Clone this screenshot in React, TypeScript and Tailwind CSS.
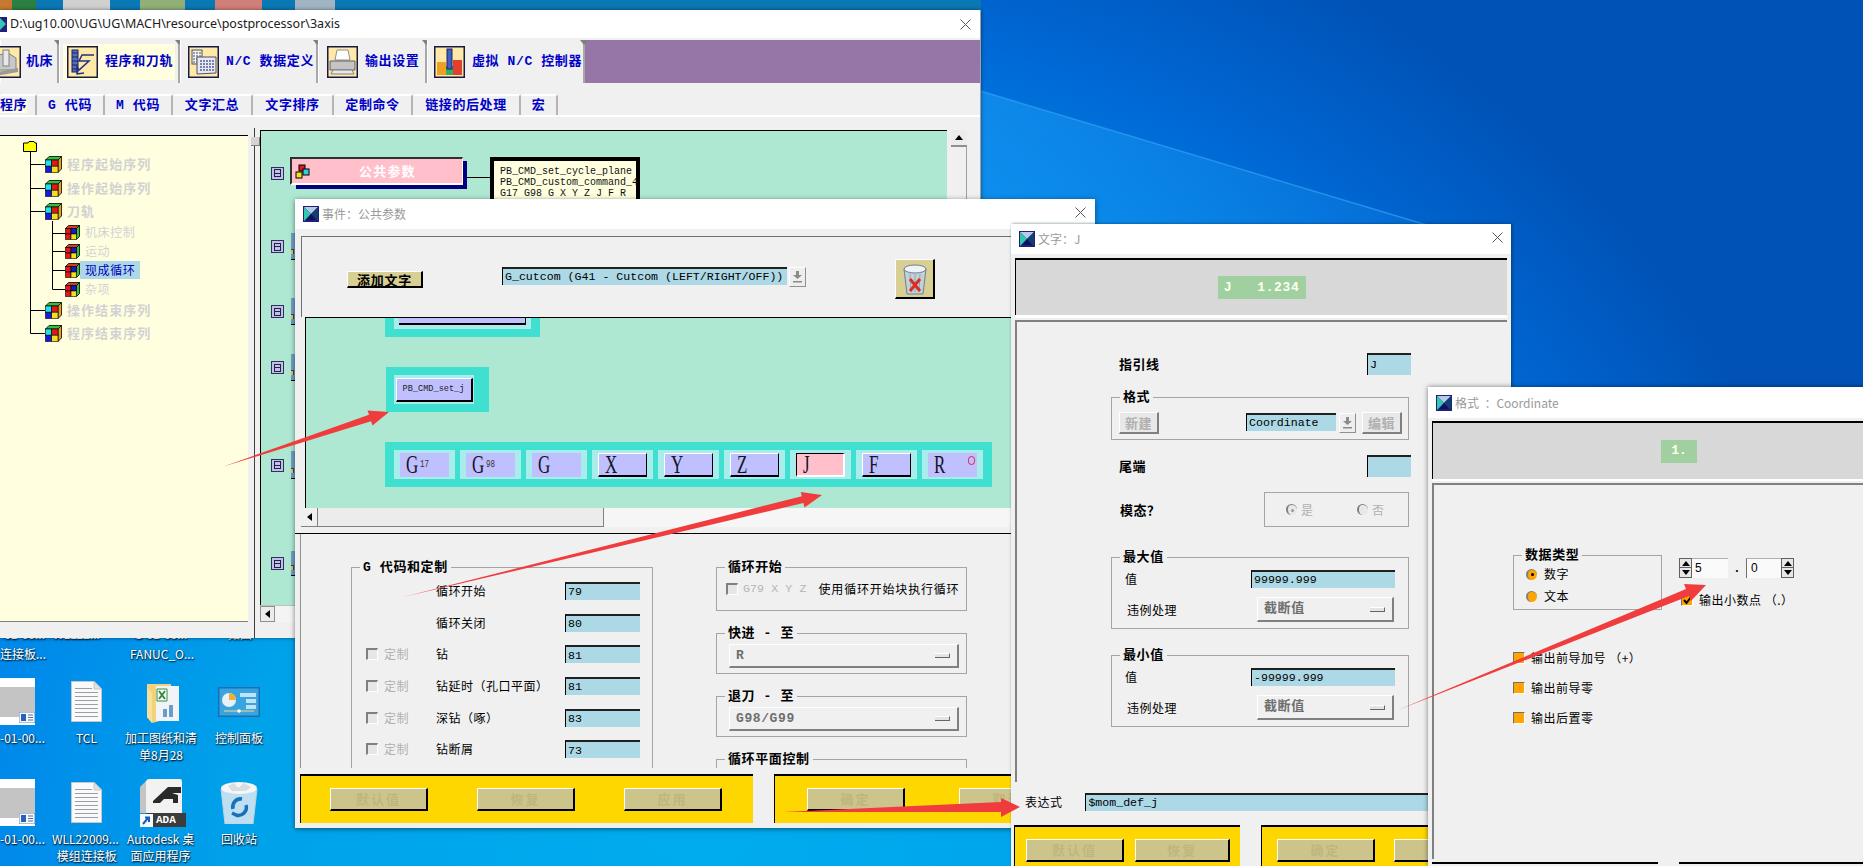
import React from "react";

const MONO = "font-['Liberation_Mono','Noto_Sans_CJK_SC',monospace]";
const CJK = "font-['Noto_Sans_CJK_SC','Liberation_Sans',sans-serif]";

function CloseX({ className }: { className: string }) {
  return (
    <svg className={className} width="11" height="11" viewBox="0 0 11 11">
      <path d="M0.5 0.5 L10.5 10.5 M10.5 0.5 L0.5 10.5" stroke="#555" strokeWidth="1" fill="none" />
    </svg>
  );
}

function UgIcon() {
  return (
    <svg width="16" height="16" viewBox="0 0 16 16" className="shrink-0">
      <rect width="16" height="16" fill="#20207a" />
      <path d="M1 1 L15 1 L8 8 Z" fill="#b8c8e8" />
      <path d="M1 1 L8 8 L1 15 Z" fill="#30c8b0" />
      <path d="M15 1 L8 8 L15 15 Z" fill="#104070" />
      <path d="M3 14 L8 8 L13 14 Z" fill="#101060" />
    </svg>
  );
}

function DlgTitle({ title, h }: { title: string; h: string }) {
  return (
    <div className={`${h} bg-white flex items-center pl-[8px] gap-[3px] shrink-0`}>
      <UgIcon />
      <span className={`${CJK} text-[12px] text-[#9a9a9a] whitespace-pre`}>{title}</span>
    </div>
  );
}

function BigCube() {
  return (
    <svg width="17" height="17" viewBox="0 0 17 17" className="shrink-0">
      <path d="M0.5 4 L4 0.5 L16.5 0.5 L13 4 Z" fill="#30c040" stroke="#000" strokeWidth="0.8" />
      <path d="M13 4 L16.5 0.5 L16.5 13 L13 16.5 Z" fill="#e8a020" stroke="#000" strokeWidth="0.8" />
      <rect x="0.5" y="4" width="6.2" height="6.2" fill="#20e0e8" stroke="#000" strokeWidth="0.6" />
      <rect x="6.7" y="4" width="6.3" height="6.2" fill="#e01818" stroke="#000" strokeWidth="0.6" />
      <rect x="0.5" y="10.2" width="6.2" height="6.3" fill="#1818e0" stroke="#000" strokeWidth="0.6" />
      <rect x="6.7" y="10.2" width="6.3" height="6.3" fill="#f0e020" stroke="#000" strokeWidth="0.6" />
    </svg>
  );
}

function SmallCube() {
  return (
    <svg width="15" height="15" viewBox="0 0 15 15" className="shrink-0">
      <path d="M0.5 3.5 L3.5 0.5 L14.5 0.5 L11.5 3.5 Z" fill="#d04020" stroke="#000" strokeWidth="0.8" />
      <path d="M11.5 3.5 L14.5 0.5 L14.5 11.5 L11.5 14.5 Z" fill="#30c040" stroke="#000" strokeWidth="0.8" />
      <rect x="0.5" y="3.5" width="5.5" height="5.5" fill="#e01818" stroke="#000" strokeWidth="0.6" />
      <rect x="6" y="3.5" width="5.5" height="5.5" fill="#1818c0" stroke="#000" strokeWidth="0.6" />
      <rect x="0.5" y="9" width="5.5" height="5.5" fill="#e01818" stroke="#000" strokeWidth="0.6" />
      <rect x="6" y="9" width="5.5" height="5.5" fill="#f0e020" stroke="#000" strokeWidth="0.6" />
    </svg>
  );
}

function TreeTop({ label, h }: { label: string; h: string }) {
  return (
    <div className={`${h} flex items-center pl-[45px] gap-[5px]`}>
      <BigCube />
      <span className={`${CJK} font-bold text-[13px] tracking-[1.05px] text-[#d2d2d2]`}>{label}</span>
    </div>
  );
}

function TreeSub({ label, h, sel }: { label: string; h: string; sel?: boolean }) {
  return (
    <div className={`${h} flex items-center pl-[65px]`}>
      <SmallCube />
      <span
        className={`${CJK} text-[12px] tracking-[0.6px] h-[18px] leading-[18px] w-[60px] pl-[5px] ${
          sel ? "bg-[#add8e6] text-[#0000c0]" : "text-[#d2d2d2]"
        }`}
      >
        {label}
      </span>
    </div>
  );
}

function TabIcon({ children }: { children: React.ReactNode }) {
  return (
    <svg width="31" height="32" viewBox="0 0 31 32" className="shrink-0">
      <rect x="0.75" y="0.75" width="29.5" height="30.5" fill="#ffe9a8" stroke="#1a1a40" strokeWidth="1.5" />
      {children}
    </svg>
  );
}

function ToolTab({
  w,
  pad,
  icon,
  label,
  sel,
  gap,
}: {
  w: string;
  pad: string;
  icon: React.ReactNode;
  label: string;
  sel?: boolean;
  gap?: string;
}) {
  return (
    <div className={`${w} ${pad} relative h-full shrink-0 flex items-center border-r-2 border-r-[#a8a8a8] border-l border-l-white bg-[#f0f0f0]`}>
      <span className="absolute -right-[5px] top-0 w-0 h-0 border-x-[4px] border-x-transparent border-t-[5px] border-t-[#808080]" />
      {sel && <span className="absolute left-[3px] right-[3px] top-[4px] bottom-[3px] bg-[#ffffe0]" />}
      <span className={`relative flex items-center ${gap ?? "gap-[7px]"}`}>
        {icon}
        <span className={`${MONO} font-bold text-[13px] tracking-[0.6px] text-[#0000c8] whitespace-pre`}>{label}</span>
      </span>
    </div>
  );
}

function SubTab({ w, label, sel }: { w: string; label: string; sel?: boolean }) {
  return (
    <div className={`${w} h-full flex items-center ${sel ? "justify-start" : "justify-center"} shrink-0 border-t-2 border-t-white border-r-2 border-r-[#b4b4b4] rounded-t-[3px]`}>
      <span className={`${MONO} font-bold text-[13px] tracking-[0.6px] text-[#0000c8] whitespace-pre leading-[14px] ${sel ? "bg-[#ffffe0]" : ""}`}>{label}</span>
    </div>
  );
}

function Minus() {
  return (
    <div className="w-[13px] h-[13px] shrink-0 bg-[#c0c0e8] border border-[#303060] flex items-center justify-center">
      <div className="w-[7px] h-[8px] border border-[#202040] flex items-center justify-center">
        <div className="w-[5px] h-px bg-[#202040]" />
      </div>
    </div>
  );
}

function Sliver() {
  return (
    <div className="w-[6px] h-full bg-[#6f9fc4] border-b border-b-black flex items-end pb-[5px]">
      <div className="w-[3px] h-[5px] bg-[#d8c870] border-t border-r border-[#404040]" />
    </div>
  );
}

function CanvasRow({ mt, h }: { mt: string; h: string }) {
  return (
    <div className={`${mt} ${h} flex items-center pl-[10px] gap-[7px]`}>
      <Minus />
      <Sliver />
    </div>
  );
}

function Bevel({ className, children }: { className: string; children?: React.ReactNode }) {
  return (
    <div className={`${className} border-t border-l border-t-white border-l-white border-r-2 border-b-2 border-r-black border-b-black flex items-center justify-center`}>
      {children}
    </div>
  );
}

function Inp({ className, value }: { className: string; value?: string }) {
  return (
    <div className={`${className} bg-[#add8e6] border-t-2 border-t-[#202020] border-l border-l-black flex items-center pl-[2px] ${MONO} text-[11.6px] text-black leading-none whitespace-pre overflow-hidden`}>
      {value}
    </div>
  );
}

function ArrowBtn({ className }: { className: string }) {
  return (
    <div className={`${className} bg-[#eeeeee] border-t border-l border-white border-r border-b border-r-[#909090] border-b-[#909090] flex items-center justify-center`}>
      <svg width="9" height="12" viewBox="0 0 9 12">
        <path d="M3 0 H6 V4 H9 L4.5 8 L0 4 H3 Z" fill="#8a8a8a" />
        <rect y="10" width="9" height="1.5" fill="#8a8a8a" />
      </svg>
    </div>
  );
}

function Drop({ className, value }: { className: string; value: string }) {
  return (
    <div className={`${className} bg-[#f0f0f0] border-t border-l border-t-white border-l-white border-r-2 border-b-2 border-r-[#808080] border-b-[#808080] flex items-center justify-between pl-[6px] pr-[7px]`}>
      <span className={`${MONO} font-bold text-[13px] text-[#6e6e6e] tracking-[0.6px]`}>{value}</span>
      <span className="w-[15px] h-[5px] bg-[#e4e4e4] border-r border-b border-r-[#666] border-b-[#666] border-t border-t-white" />
    </div>
  );
}

function Group({ className, label, labelX, children }: { className: string; label: string; labelX?: string; children?: React.ReactNode }) {
  return (
    <div className={`${className} relative border border-[#a4a4a4]`}>
      <span className={`absolute -top-[9px] ${labelX ?? "left-[8px]"} bg-[#f0f0f0] px-[3px] ${MONO} font-bold text-[13px] leading-[17px] tracking-[0.6px] text-black whitespace-pre`}>
        {label}
      </span>
      {children}
    </div>
  );
}

function Label({ children, className }: { children: React.ReactNode; className?: string }) {
  return <span className={`${CJK} text-[12px] tracking-[0.5px] text-black whitespace-pre ${className ?? ""}`}>{children}</span>;
}

function BoldLabel({ children, className }: { children: React.ReactNode; className?: string }) {
  return <span className={`${CJK} font-bold text-[13px] tracking-[0.5px] text-black whitespace-pre ${className ?? ""}`}>{children}</span>;
}

function DisabledCheck() {
  return <span className="w-[12px] h-[12px] shrink-0 bg-[#e6e6e6] border-t-2 border-l-2 border-t-[#808080] border-l-[#808080] border-r border-b border-r-white border-b-white" />;
}

function LetterCell({ letter, sup, raised, pink, dot }: { letter: string; sup?: string; raised?: boolean; pink?: boolean; dot?: boolean }) {
  return (
    <div className="w-[61px] h-[29px] bg-[#a8ecec] flex items-center justify-center shrink-0">
      <div
        className={`relative w-[49px] h-[24px] flex items-center pl-[6px] gap-[2px] ${pink ? "bg-[#ffc0cb]" : "bg-[#c0c0ff]"} ${
          raised
            ? pink
              ? "border-t border-l border-t-black border-l-black border-r-2 border-b-2 border-r-white border-b-white"
              : "border-t border-l border-t-white border-l-white border-r border-b-2 border-r-black border-b-black"
            : ""
        }`}
      >
        <span className="font-['Liberation_Serif',serif] text-[25px] leading-none text-[#141428] scale-x-[0.68] origin-left w-[12px]">{letter}</span>
        {sup && <span className={`${MONO} text-[10px] leading-none text-[#333] scale-x-75 origin-left`}>{sup}</span>}
        {dot && <span className="absolute right-[2px] top-[3px] w-[7px] h-[9px] rounded-full border-[1.5px] border-[#e0204a]" />}
      </div>
    </div>
  );
}

function YellowBtn({ className, label }: { className: string; label: string }) {
  return (
    <Bevel className={`${className} bg-[#cdc48c] h-[23px] shrink-0`}>
      <span className={`${CJK} font-bold text-[13px] tracking-[2px] text-[#bfb67e]`}>{label}</span>
    </Bevel>
  );
}

function Radio({ on, disabled }: { on?: boolean; disabled?: boolean }) {
  return (
    <span
      className={`w-[11px] h-[11px] rounded-full shrink-0 flex items-center justify-center border-l-2 border-t border-l-[#808080] border-t-[#808080] ${
        disabled ? "bg-[#e8e8e8]" : "bg-[#ffa500]"
      }`}
    >
      {on && <span className={`w-[3px] h-[3px] rounded-full ${disabled ? "bg-[#9a9a9a]" : "bg-black"}`} />}
    </span>
  );
}

function OrangeCheck({ checked }: { checked?: boolean }) {
  return (
    <span className="w-[12px] h-[12px] shrink-0 bg-[#ffa500] border-t border-l border-t-[#707070] border-l-[#707070] border-r border-b border-r-white border-b-white flex items-center justify-center">
      {checked && (
        <svg width="9" height="9" viewBox="0 0 9 9">
          <path d="M1 4 L3.5 7 L8 1" stroke="#000" strokeWidth="2" fill="none" />
        </svg>
      )}
    </span>
  );
}

function SpinArrows() {
  return (
    <div className="flex flex-col w-[13px] h-[20px] shrink-0 border border-[#606060]">
      <div className="h-1/2 bg-[#e8e8e8] flex items-center justify-center border-b border-[#606060]">
        <span className="w-0 h-0 border-x-[4px] border-x-transparent border-b-[5px] border-b-black" />
      </div>
      <div className="h-1/2 bg-[#e8e8e8] flex items-center justify-center">
        <span className="w-0 h-0 border-x-[4px] border-x-transparent border-t-[5px] border-t-black" />
      </div>
    </div>
  );
}

function DocIcon({ className }: { className: string }) {
  return (
    <svg className={`absolute ${className}`} width="31" height="41" viewBox="0 0 31 41">
      <path d="M0.5 0.5 H23 L30.5 8 V40.5 H0.5 Z" fill="#fafafa" stroke="#c8c8c8" />
      <path d="M23 0.5 V8 H30.5 Z" fill="#e0e0e0" stroke="#c8c8c8" />
      {[7, 11, 15, 19, 23, 27, 31, 35].map((y) => (
        <rect key={y} x="4" y={y} width={y < 9 ? 17 : 23} height="1" fill="#9aa0a8" />
      ))}
    </svg>
  );
}

function Thumb({ className }: { className: string }) {
  return (
    <div className={`absolute ${className} w-[35px] h-[47px] bg-white flex flex-col justify-center`}>
      <div className="w-full h-[30px] bg-[#c4c4c4]" />
      <svg className="absolute right-0 bottom-[2px]" width="16" height="11" viewBox="0 0 16 11">
        <rect width="16" height="11" fill="#f4f8ff" stroke="#6a8ab0" />
        <rect x="2" y="2" width="5" height="7" fill="#2a60b8" />
        <path d="M9 3 H14 M9 5.5 H14 M9 8 H14" stroke="#5a7090" />
      </svg>
    </div>
  );
}

function DeskLabel({ className, text }: { className: string; text: string }) {
  return (
    <span className={`absolute ${className} ${CJK} text-[12px] leading-[17px] text-white text-center [text-shadow:0_1px_2px_#003050,1px_1px_1px_#003050] whitespace-pre`}>
      {text}
    </span>
  );
}

export default function App() {
  return (
    <div className="relative w-[1863px] h-[866px] overflow-hidden bg-[radial-gradient(ellipse_1150px_1000px_at_700px_820px,#00acee_0%,#00a2ea_40%,#0088ea_62%,#0068d4_82%,#0052b6_100%)] font-['Liberation_Sans','Noto_Sans_CJK_SC',sans-serif]">
      {/* wallpaper light beam */}
      <svg className="absolute left-0 top-0" width="1863" height="866" viewBox="0 0 1863 866">
        <defs>
          <linearGradient id="beam" x1="980" y1="90" x2="1500" y2="420" gradientUnits="userSpaceOnUse">
            <stop offset="0" stopColor="#1a9cf6" stopOpacity="0.55" />
            <stop offset="1" stopColor="#1a9cf6" stopOpacity="0" />
          </linearGradient>
        </defs>
        <path d="M977 90 L1500 247 L1500 500 L977 500 Z" fill="url(#beam)" />
        <path d="M977 90 L1430 226" stroke="#3aa8f8" strokeOpacity="0.6" strokeWidth="1.5" />
      </svg>

      {/* wallpaper strip above the main window */}
      <div className="absolute left-0 top-0 w-[981px] h-[10px] bg-[#0a78b4] flex">
        <div className="w-[12px] h-full bg-[#c87830]" />
        <div className="w-[24px] h-full bg-[#2a8040]" />
        <div className="w-[27px] h-full bg-[#0a78b4]" />
        <div className="w-[47px] h-full bg-[#d0d0d0]" />
        <div className="w-[30px] h-full bg-[#0a78b4]" />
        <div className="w-[45px] h-full bg-[#90b078]" />
        <div className="w-[30px] h-full bg-[#0a78b4]" />
        <div className="w-[47px] h-full bg-[#d08078]" />
        <div className="w-[33px] h-full bg-[#0a78b4]" />
        <div className="w-[40px] h-full bg-[#a0b4c4]" />
      </div>

      {/* desktop icons */}
      <DeskLabel className="left-0 top-[625px]" text="-01-00..." />
      <DeskLabel className="left-[53px] top-[625px]" text="WLL22..." />
      <DeskLabel className="left-[134px] top-[625px]" text="G-01-00..." />
      <DeskLabel className="left-[228px] top-[625px]" text="如图" />
      <DeskLabel className="left-0 top-[645px]" text="连接板..." />
      <DeskLabel className="left-[130px] top-[645px]" text="FANUC_O..." />

      <Thumb className="left-0 top-[678px]" />
      <DocIcon className="left-[71px] top-[681px]" />
      <svg className="absolute left-[147px] top-[683px]" width="32" height="41" viewBox="0 0 32 41">
        <path d="M0 1 H24 V35 L5 40 L0 34 Z" fill="#f4d27a" />
        <path d="M9 3 H32 V38 H9 Z" fill="#f0f4f8" />
        <path d="M10 6 H20 V18 H10 Z" fill="#fff" stroke="#2e8b3c" />
        <path d="M12 8 L18 16 M18 8 L12 16" stroke="#2e8b3c" strokeWidth="2" />
        <path d="M16 34 V26 H20 V34 Z M22 34 V22 H26 V34 Z" fill="#6a9cc8" />
        <path d="M0 34 L5 40 V10 L0 4 Z" fill="#f8e09a" />
      </svg>
      <svg className="absolute left-[218px] top-[687px]" width="42" height="30" viewBox="0 0 42 30">
        <rect width="42" height="30" fill="#1a70b0" />
        <rect x="1.5" y="1.5" width="39" height="27" fill="#3aa4e0" />
        <circle cx="11" cy="13" r="7" fill="#e8f0f8" />
        <path d="M11 13 V6 A7 7 0 0 1 18 13 Z" fill="#f0b030" />
        <path d="M22 6 H38 V10 H22 Z M28 12 H38 V16 H28 Z M28 18 H38 V22 H28 Z" fill="#bfe4f8" />
        <path d="M6 24 H36" stroke="#f0e080" />
        <circle cx="21" cy="24" r="1.8" fill="#fff" />
      </svg>
      <DeskLabel className="left-0 top-[729px]" text="-01-00..." />
      <DeskLabel className="left-[76px] top-[729px]" text="TCL" />
      <DeskLabel className="left-[125px] top-[729px]" text={"加工图纸和清\n单8月28"} />
      <DeskLabel className="left-[215px] top-[729px]" text="控制面板" />

      <Thumb className="left-0 top-[779px]" />
      <DocIcon className="left-[71px] top-[782px]" />
      <svg className="absolute left-[140px] top-[779px]" width="46" height="48" viewBox="0 0 46 48">
        <path d="M6 2 Q7 0 9 0 H40 Q42 0 42 3 V34 H6 Z" fill="#f2f2f2" />
        <path d="M0 8 L6 2 V34 H0 Z" fill="#c4c4c4" />
        <path d="M13 22 L28 8 H41 V14 H32 L38 16 V24 H33 V20 L24 20 L20 24 H13 Z" fill="#2a2a2a" />
        <rect x="6" y="34" width="40" height="14" fill="#3c3c3c" />
        <rect x="0" y="35" width="13" height="13" fill="#f8f8f8" />
        <path d="M3 45 L8 39 M5 38.5 H9 V43" stroke="#1060c0" strokeWidth="2" fill="none" />
      </svg>
      <span className={`absolute left-[156px] top-[813px] ${MONO} font-bold text-[11px] text-white leading-[14px]`}>ADA</span>
      <svg className="absolute left-[220px] top-[781px]" width="38" height="43" viewBox="0 0 38 43">
        <path d="M1 8 L37 8 L33 43 H5 Z" fill="#dfeaf2" fillOpacity="0.85" stroke="#c0d0dc" />
        <ellipse cx="19" cy="7" rx="18" ry="6" fill="#f4f6f8" />
        <path d="M8 5 L14 2 L18 7 L24 2 L31 6 L26 10 L12 10 Z" fill="#d8dde2" />
        <path d="M13 28 A8 8 0 0 1 22 18 M26 24 A8 8 0 0 1 16 34 M12 32 L18 35" stroke="#1870b8" strokeWidth="3.5" fill="none" />
      </svg>
      <DeskLabel className="left-0 top-[830px]" text="-01-00..." />
      <DeskLabel className="left-[52px] top-[830px]" text={"WLL22009...\n 模组连接板"} />
      <DeskLabel className="left-[127px] top-[830px]" text={"Autodesk 桌\n面应用程序"} />
      <DeskLabel className="left-[221px] top-[830px]" text="回收站" />

      {/* main window */}
      <div className="absolute left-0 top-[10px] w-[981px] h-[628px] bg-[#f0f0f0] flex flex-col shadow-[0_0_4px_rgba(0,0,0,0.45)] border-r border-r-[#a0a0a0] overflow-hidden">
        <div className="h-[28px] bg-white shrink-0 flex items-center relative">
          <svg width="7" height="15" viewBox="0 0 7 15" className="shrink-0">
            <rect width="7" height="15" fill="#20207a" />
            <path d="M0 1 L6 7 L0 13 Z" fill="#30c8b0" />
          </svg>
          <span className="ml-[3px] font-['Noto_Sans','Noto_Sans_CJK_SC',sans-serif] text-[12.5px] text-[#202020] whitespace-pre">D:\ug10.00\UG\UG\MACH\resource\postprocessor\3axis</span>
          <CloseX className="absolute right-[9px] top-[9px]" />
        </div>

        <div className="mt-[2px] h-[43px] flex shrink-0">
          <ToolTab
            w="w-[59px]"
            pad="pl-0"
            gap="gap-[5px]"
            label="机床"
            icon={
              <div className="-ml-[11px]">
                <TabIcon>
                  <path d="M4 10 L18 7 L26 12 V24 H8 Z" fill="#c8c8c8" stroke="#808080" />
                  <rect x="13" y="4" width="6" height="16" fill="#e8e8e8" stroke="#808080" />
                  <path d="M2 27 L28 22 V26 L6 30 Z" fill="#9a9a9a" />
                </TabIcon>
              </div>
            }
          />
          <ToolTab
            w="w-[121px]"
            pad="pl-[7px]"
            sel
            label="程序和刀轨"
            icon={
              <TabIcon>
                <rect x="5" y="4" width="6" height="22" fill="#5070c0" stroke="#202060" />
                <path d="M5 7 H11 M5 11 H11 M5 15 H11 M5 19 H11 M5 23 H11" stroke="#202060" />
                <path d="M27 9 H15 L12 15 H22 L12 24 L10 21 L10 28 L17 27" stroke="#203080" strokeWidth="1.5" fill="none" />
              </TabIcon>
            }
          />
          <ToolTab
            w="w-[138px]"
            pad="pl-[7px]"
            label="N/C 数据定义"
            icon={
              <TabIcon>
                <rect x="4" y="4" width="10" height="14" fill="#f0f0f0" stroke="#505060" />
                <path d="M5 7 H13 M5 10 H13 M5 13 H13 M5 16 H13" stroke="#505060" strokeDasharray="2 1" />
                <path d="M9 11 H28 V27 L9 28 Z" fill="#e8e8f0" stroke="#505060" />
                <path d="M12 15 H26 M12 18 H26 M12 21 H26 M12 24 H26" stroke="#5060a0" strokeWidth="1.5" strokeDasharray="2 1" />
              </TabIcon>
            }
          />
          <ToolTab
            w="w-[109px]"
            pad="pl-[8px]"
            label="输出设置"
            icon={
              <TabIcon>
                <path d="M10 4 H21 L23 14 H8 Z" fill="#fff" stroke="#909090" />
                <path d="M3 15 H28 V24 H3 Z" fill="#c4c4c4" stroke="#606060" />
                <path d="M6 24 H25 L27 28 H4 Z" fill="#e8e8e8" stroke="#808080" />
              </TabIcon>
            }
          />
          <ToolTab
            w="w-[158px]"
            pad="pl-[6px]"
            label="虚拟 N/C 控制器"
            icon={
              <TabIcon>
                <path d="M3 16 H12 V29 H3 Z" fill="#f0a020" />
                <path d="M19 14 H28 V29 H19 Z" fill="#e04030" />
                <path d="M12 20 H19 V29 H12 Z" fill="#30b060" />
                <rect x="13" y="3" width="5" height="20" fill="#4060c0" stroke="#202060" />
              </TabIcon>
            }
          />
          <div className="flex-1 h-full bg-[#9676a6]" />
        </div>

        <div className="mt-[11px] h-[21px] flex shrink-0">
          <SubTab w="w-[37px]" sel label="程序" />
          <SubTab w="w-[68px]" label="G 代码" />
          <SubTab w="w-[68px]" label="M 代码" />
          <SubTab w="w-[80px]" label="文字汇总" />
          <SubTab w="w-[81px]" label="文字排序" />
          <SubTab w="w-[79px]" label="定制命令" />
          <SubTab w="w-[108px]" label="链接的后处理" />
          <SubTab w="w-[37px]" label="宏" />
        </div>
        <div className="h-[2px] bg-white shrink-0" />

        <div className="flex flex-1 min-h-0">
          {/* tree */}
          <div className="relative mt-[18px] w-[248px] h-[487px] shrink-0 bg-[#ffffe0] border-t border-t-black border-b border-b-[#808080]">
            <svg className="absolute left-0 top-0" width="100" height="210" viewBox="0 0 100 210">
              <path d="M30.5 15 V197.5 M30.5 28.5 H45 M30.5 52.5 H45 M30.5 75.5 H45 M30.5 174.5 H45 M30.5 197.5 H45 M52.5 85 V153.5 M52.5 97.5 H65 M52.5 115.5 H65 M52.5 134.5 H65 M52.5 153.5 H65" stroke="#000" fill="none" />
            </svg>
            <div className="relative">
              <div className="h-[16px] pl-[23px] pt-[5px]">
                <svg width="14" height="11" viewBox="0 0 14 11" className="block">
                  <path d="M0.5 2 H5 L6 0.5 H11 L12 2 H13.5 V10.5 H0.5 Z" fill="#ffff00" stroke="#000" />
                </svg>
              </div>
              <TreeTop h="h-[24px]" label="程序起始序列" />
              <TreeTop h="h-[24px]" label="操作起始序列" />
              <TreeTop h="h-[22px]" label="刀轨" />
              <TreeSub h="h-[20px]" label="机床控制" />
              <TreeSub h="h-[18px]" label="运动" />
              <TreeSub h="h-[20px]" sel label="现成循环" />
              <TreeSub h="h-[18px]" label="杂项" />
              <TreeTop h="h-[24px]" label="操作结束序列" />
              <TreeTop h="h-[22px]" label="程序结束序列" />
            </div>
          </div>
          {/* splitter */}
          <div className="relative w-[12px] shrink-0 mt-[11px] flex justify-center">
            <div className="w-px h-full bg-[#404040]" />
            <div className="absolute left-[3px] top-[9px] w-[9px] h-[9px] bg-[#d4d4d4] border-b border-r border-[#808080]" />
          </div>
          {/* canvas */}
          <div className="w-[687px] shrink-0 mt-[13px] flex flex-col">
            <div className="h-[475px] bg-[#aee8d2] border-t border-l border-t-black border-l-black overflow-hidden">
              <div className="mt-[26px] h-[32px] flex items-center pl-[10px] gap-[6px]">
                <Minus />
                <div className="relative w-[173px] h-[28px] self-start">
                  <div className="absolute left-[6px] top-[4px] w-[171px] h-[28px] bg-[#000080]" />
                  <div className="relative w-full h-full bg-[#ffc0cb] border-t-2 border-l-2 border-t-[#303030] border-l-[#303030] border-r border-b-2 border-r-white border-b-white flex items-center">
                    <svg className="ml-[3px]" width="15" height="15" viewBox="0 0 15 15">
                      <rect x="4" y="1" width="6" height="6" fill="#e01818" stroke="#000" />
                      <rect x="1" y="8" width="6" height="6" fill="#f0e020" stroke="#000" />
                      <rect x="8" y="5" width="6" height="6" fill="#30d0d8" stroke="#000" />
                    </svg>
                    <span className={`${CJK} font-bold text-[13px] tracking-[1.2px] text-white ml-[49px]`}>公共参数</span>
                  </div>
                </div>
                <div className="w-[23px] h-px bg-black -ml-[2px] mt-[8px]" />
                <div className={`-ml-[6px] self-start w-[150px] h-[50px] bg-[#ffffe0] border-[4px] border-black pl-[6px] pt-[5px] ${MONO} text-[10px] leading-[11px] text-[#111] whitespace-pre shrink-0`}>
                  {"PB_CMD_set_cycle_plane\nPB_CMD_custom_command_4\nG17 G98 G X Y Z J F R"}
                </div>
              </div>
              <CanvasRow mt="mt-[44px]" h="h-[27px]" />
              <CanvasRow mt="mt-[38px]" h="h-[27px]" />
              <CanvasRow mt="mt-[29px]" h="h-[27px]" />
              <CanvasRow mt="mt-[70px]" h="h-[28px]" />
              <CanvasRow mt="mt-[72px]" h="h-[25px]" />
            </div>
            <div className="h-[17px] bg-[#f4f4f4] border-t border-[#c0c0c0] flex">
              <div className="w-[15px] h-full bg-[#ececec] border border-[#909090] flex items-center justify-center">
                <span className="w-0 h-0 border-y-[4px] border-y-transparent border-r-[5px] border-r-black" />
              </div>
            </div>
          </div>
          {/* vertical scroll */}
          <div className="mt-[13px] w-[21px] h-[475px] pl-[4px] shrink-0">
            <div className="w-[16px] h-[17px] bg-[#ececec] border-b-2 border-b-[#909090] flex items-center justify-center">
              <span className="w-0 h-0 border-x-[4px] border-x-transparent border-b-[5px] border-b-black" />
            </div>
            <div className="w-[16px] h-full bg-[#f0f0f0] border-r border-[#a0a0a0]" />
          </div>
        </div>
      </div>

      {/* event dialog */}
      <div className="absolute left-[295px] top-[199px] w-[800px] h-[629px] bg-[#f0f0f0] flex flex-col shadow-[0_1px_5px_rgba(0,0,0,0.5)] overflow-hidden">
        <DlgTitle h="h-[30px]" title="事件：公共参数" />
        <CloseX className="absolute right-[9px] top-[8px]" />
        <div className="mt-[7px] ml-[6px] h-[81px] shrink-0 border-t border-l border-t-[#707070] border-l-[#707070] flex items-start">
          <Bevel className="ml-[45px] mt-[34px] w-[76px] h-[17px] bg-[#d8cf94] shrink-0">
            <span className={`${CJK} font-bold text-[13px] leading-none text-black tracking-[0.8px]`}>添加文字</span>
          </Bevel>
          <div className="ml-[79px] mt-[30px] flex items-start shrink-0">
            <Inp className="w-[285px] h-[18px]" value="G_cutcom (G41 - Cutcom (LEFT/RIGHT/OFF))" />
            <ArrowBtn className="ml-[2px] w-[17px] h-[20px]" />
          </div>
          <Bevel className="ml-[89px] mt-[22px] w-[40px] h-[40px] bg-[#d8cf94] shrink-0">
            <svg width="26" height="32" viewBox="0 0 26 32">
              <path d="M2 6 L24 6 L21 31 H5 Z" fill="#c4d0d8" stroke="#708090" />
              <path d="M8 11 L9 29 M13 11 V29 M18 11 L17 29" stroke="#94a4b0" />
              <ellipse cx="13" cy="6" rx="11" ry="4" fill="#eef3f6" stroke="#708090" />
              <path d="M8 16 L18 28 M18 16 L8 28" stroke="#d83020" strokeWidth="3" />
            </svg>
          </Bevel>
        </div>
        <div className="ml-[10px] h-[191px] shrink-0 bg-[#aee8d2] border-t border-l border-t-black border-l-black overflow-hidden">
          <div className="ml-[79px] w-[155px] h-[19px] bg-[#40e0d0] flex justify-center">
            <div className="w-[137px] h-[11px] bg-[#a8ecec] flex justify-center">
              <div className="w-[127px] h-[7px] bg-[#c0c0ff] border-r border-b-2 border-r-black border-b-black" />
            </div>
          </div>
          <div className="mt-[30px] ml-[80px] w-[103px] h-[45px] bg-[#40e0d0] flex items-center pl-[8px]">
            <div className="w-[80px] h-[29px] bg-[#a8ecec] flex items-center justify-center">
              <Bevel className="w-[77px] h-[24px] bg-[#c0c0ff]">
                <span className={`${MONO} text-[8.6px] text-[#222]`}>PB_CMD_set_j</span>
              </Bevel>
            </div>
          </div>
          <div className="mt-[30px] ml-[79px] w-[607px] h-[45px] bg-[#40e0d0] flex items-center pl-[9px] gap-[5px]">
            <LetterCell letter="G" sup="17" />
            <LetterCell letter="G" sup="98" />
            <LetterCell letter="G" />
            <LetterCell letter="X" raised />
            <LetterCell letter="Y" raised />
            <LetterCell letter="Z" raised />
            <LetterCell letter="J" raised pink />
            <LetterCell letter="F" raised />
            <LetterCell letter="R" dot />
          </div>
        </div>
        <div className="ml-[6px] h-[19px] shrink-0 bg-[#f6f6f6] flex">
          <div className="w-[17px] h-full bg-[#f0f0f0] border-r border-b border-[#808080] flex items-center justify-center">
            <span className="w-0 h-0 border-y-[4px] border-y-transparent border-r-[5px] border-r-black" />
          </div>
          <div className="w-[286px] h-full bg-[#ececec] border-r border-b border-[#808080]" />
        </div>
        <div className="h-[7px] shrink-0 border-b border-b-black" />
        <div className="ml-[5px] h-[234px] shrink-0 border-l border-l-[#909090] flex items-start overflow-hidden">
          <Group className="ml-[50px] mt-[33px] w-[302px] h-[260px] shrink-0" label="G 代码和定制">
            <div className="pt-[14px] pr-[12px] flex flex-col gap-[13.7px]">
              {[
                ["", "循环开始", "79"],
                ["", "循环关闭", "80"],
                ["c", "钻", "81"],
                ["c", "钻延时（孔口平面）", "81"],
                ["c", "深钻（啄）", "83"],
                ["c", "钻断屑", "73"],
              ].map(([c, t, v]) => (
                <div key={t} className="h-[18px] flex items-center">
                  <div className="w-[84px] pl-[14px] flex items-center gap-[6px] shrink-0">
                    {c && <DisabledCheck />}
                    {c && <span className={`${CJK} text-[12px] tracking-[0.5px] text-[#b0b0b0]`}>定制</span>}
                  </div>
                  <Label>{t}</Label>
                  <Inp className="ml-auto w-[75px] h-[18px]" value={v} />
                </div>
              ))}
            </div>
          </Group>
          <div className="ml-[63px] mt-[33px] w-[251px] flex flex-col shrink-0">
            <Group className="h-[44px] flex items-center pl-[9px] gap-[5px]" label="循环开始" labelX="left-[8px]">
              <DisabledCheck />
              <span className={`${MONO} text-[11.6px] text-[#b4b4b4] tracking-[0.1px] whitespace-pre`}>G79 X Y Z</span>
              <span className={`${CJK} text-[12px] tracking-[0.8px] text-black ml-[7px] whitespace-pre`}>使用循环开始块执行循环</span>
            </Group>
            <Group className="mt-[22px] h-[41px] pl-[12px] pt-[10px]" label="快进 - 至">
              <Drop className="w-[230px] h-[24px]" value="R" />
            </Group>
            <Group className="mt-[22px] h-[41px] pl-[12px] pt-[10px]" label="退刀 - 至">
              <Drop className="w-[230px] h-[24px]" value="G98/G99" />
            </Group>
            <Group className="mt-[22px] h-[41px]" label="循环平面控制" />
          </div>
        </div>
        <div className="mt-[6px] ml-[5px] h-[49px] flex gap-[21px] shrink-0">
          <div className="w-[453px] h-full bg-[#ffd700] border-t-2 border-l border-black flex items-start pl-[29px] pt-[12px] gap-[49px] shrink-0">
            <YellowBtn className="w-[98px]" label="默认值" />
            <YellowBtn className="w-[98px]" label="恢复" />
            <YellowBtn className="w-[98px]" label="应用" />
          </div>
          <div className="w-[320px] h-full bg-[#ffd700] border-t-2 border-l border-black flex items-start pl-[32px] pt-[12px] gap-[54px] shrink-0">
            <YellowBtn className="w-[98px]" label="确定" />
            <YellowBtn className="w-[98px]" label="取消" />
          </div>
        </div>
      </div>

      {/* word dialog */}
      <div className="absolute left-[1011px] top-[224px] w-[500px] h-[642px] bg-[#f0f0f0] flex flex-col shadow-[1px_0_3px_rgba(0,40,60,0.6)] overflow-hidden">
        <DlgTitle h="h-[30px]" title="文字：J" />
        <CloseX className="absolute right-[8px] top-[8px]" />
        <div className="mt-[4px] mx-[4px] h-[57px] shrink-0 bg-[#d8d8d8] border-t-2 border-l border-t-black border-l-black flex items-center justify-center">
          <div className={`w-[88px] h-[23px] bg-[#a0d0a0] ${MONO} font-bold text-[13px] text-[#fffff0] flex items-center justify-center whitespace-pre tracking-[0.6px]`}>J   1.234</div>
        </div>
        <div className="mx-[4px] h-[3px] bg-white shrink-0" />
        <div className="mt-[2px] mx-[4px] h-[462px] shrink-0 border-t-2 border-l-2 border-t-[#808080] border-l-[#808080] pl-[94px]">
          <div className="w-[298px] flex flex-col">
            <div className="mt-[31px] h-[22px] flex items-center justify-between pl-[8px] -mr-[2px]">
              <BoldLabel>指引线</BoldLabel>
              <Inp className="w-[44px] h-[22px]" value="J" />
            </div>
            <Group className="mt-[22px] h-[43px] flex items-start pl-[7px] pt-[14px]" label="格式" labelX="left-[8px]">
              <Bevel className="!border-r-[#808080] !border-b-[#808080] w-[40px] h-[22px] bg-[#e8e8e8]">
                <span className={`${CJK} font-bold text-[13px] leading-none text-[#b0b0b0] tracking-[0.6px]`}>新建</span>
              </Bevel>
              <Inp className="ml-[87px] mt-[1px] w-[90px] h-[18px]" value="Coordinate" />
              <ArrowBtn className="ml-[3px] mt-[1px] w-[17px] h-[20px]" />
              <Bevel className="!border-r-[#808080] !border-b-[#808080] ml-[6px] w-[40px] h-[22px] bg-[#e8e8e8]">
                <span className={`${CJK} font-bold text-[13px] leading-none text-[#b0b0b0] tracking-[0.6px]`}>编辑</span>
              </Bevel>
            </Group>
            <div className="mt-[15px] h-[22px] flex items-center justify-between pl-[8px] -mr-[2px]">
              <BoldLabel>尾端</BoldLabel>
              <Inp className="w-[44px] h-[22px]" />
            </div>
            <div className="mt-[15px] h-[35px] flex items-center pl-[9px]">
              <BoldLabel>模态？</BoldLabel>
              <div className="ml-auto w-[145px] h-full border border-[#a4a4a4] flex items-center pl-[21px]">
                <Radio on disabled />
                <span className={`${CJK} text-[12px] text-[#b0b0b0] ml-[4px] w-[56px]`}>是</span>
                <Radio disabled />
                <span className={`${CJK} text-[12px] text-[#b0b0b0] ml-[4px]`}>否</span>
              </div>
            </div>
            <Group className="mt-[30px] h-[72px] pl-[13px] pt-[12px]" label="最大值">
              <div className="h-[18px] flex items-center">
                <Label className="w-[126px]">值</Label>
                <Inp className="w-[144px] h-[18px]" value="99999.999" />
              </div>
              <div className="mt-[9px] h-[25px] flex items-center">
                <Label className="pl-[2px] w-[132px]">违例处理</Label>
                <Drop className="w-[137px] h-[25px]" value="截断值" />
              </div>
            </Group>
            <Group className="mt-[26px] h-[72px] pl-[13px] pt-[12px]" label="最小值">
              <div className="h-[18px] flex items-center">
                <Label className="w-[126px]">值</Label>
                <Inp className="w-[144px] h-[18px]" value="-99999.999" />
              </div>
              <div className="mt-[9px] h-[25px] flex items-center">
                <Label className="pl-[2px] w-[132px]">违例处理</Label>
                <Drop className="w-[137px] h-[25px]" value="截断值" />
              </div>
            </Group>
          </div>
        </div>
        <div className="mt-[11px] h-[18px] flex items-center pl-[14px] shrink-0">
          <Label className="w-[61px]">表达式</Label>
          <Inp className="w-[430px] h-[18px]" value="$mom_def_j" />
        </div>
        <div className="mt-[14px] h-[41px] flex gap-[21px] pl-[3px] shrink-0">
          <div className="w-[226px] h-full bg-[#ffd700] border-t-2 border-l border-black flex items-start pl-[11px] pt-[12px] gap-[11px] shrink-0">
            <YellowBtn className="w-[98px]" label="默认值" />
            <YellowBtn className="w-[95px]" label="恢复" />
          </div>
          <div className="w-[240px] h-full bg-[#ffd700] border-t-2 border-l border-black flex items-start pl-[15px] pt-[12px] gap-[19px] shrink-0">
            <YellowBtn className="w-[98px]" label="确定" />
            <YellowBtn className="w-[98px]" label="取消" />
          </div>
        </div>
      </div>

      {/* format dialog */}
      <div className="absolute left-[1428px] top-[387px] w-[500px] h-[479px] bg-[#f0f0f0] flex flex-col shadow-[0_0_5px_rgba(0,0,0,0.5)] overflow-hidden">
        <DlgTitle h="h-[31px]" title="格式  ：Coordinate" />
        <div className="mt-[3px] ml-[4px] h-[58px] shrink-0 bg-[#d8d8d8] border-t-2 border-l border-t-black border-l-black flex items-center pl-[228px]">
          <div className={`w-[36px] h-[23px] bg-[#a0d0a0] ${MONO} font-bold text-[13px] text-[#fffff0] flex items-center justify-center`}>1.</div>
        </div>
        <div className="ml-[4px] h-[2px] bg-white shrink-0" />
        <div className="mt-[2px] ml-[4px] h-[376px] shrink-0 border-t-2 border-l-2 border-t-[#808080] border-l-[#808080] pl-[79px] pt-[70px]">
          <div className="flex items-start">
            <Group className="w-[149px] h-[55px] shrink-0 pl-[12px] pt-[7px]" label="数据类型" labelX="left-[8px]">
              <div className="h-[22px] flex items-center gap-[7px]">
                <Radio on />
                <Label>数字</Label>
              </div>
              <div className="h-[22px] flex items-center gap-[7px]">
                <Radio />
                <Label>文本</Label>
              </div>
            </Group>
            <div className="ml-[17px] flex flex-col shrink-0">
              <div className="mt-[3px] h-[20px] flex items-center">
                <SpinArrows />
                <div className="w-[36px] h-[20px] bg-[#fafafa] border-t border-t-[#b0b0b0] pl-[3px] text-[12px] leading-[18px]">5</div>
                <span className="w-[18px] text-center font-bold text-[12px]">.</span>
                <div className="w-[35px] h-[20px] bg-[#fafafa] border-t border-l border-t-[#b0b0b0] border-l-[#707070] pl-[4px] text-[12px] leading-[18px]">0</div>
                <SpinArrows />
              </div>
              <div className="mt-[16px] ml-[2px] h-[12px] flex items-center gap-[6px]">
                <OrangeCheck checked />
                <Label>输出小数点 （.）</Label>
              </div>
            </div>
          </div>
          <div className="mt-[42px] flex flex-col gap-[18px]">
            <div className="h-[12px] flex items-center gap-[6px]">
              <OrangeCheck />
              <Label>输出前导加号 （+）</Label>
            </div>
            <div className="h-[12px] flex items-center gap-[6px]">
              <OrangeCheck />
              <Label>输出前导零</Label>
            </div>
            <div className="h-[12px] flex items-center gap-[6px]">
              <OrangeCheck />
              <Label>输出后置零</Label>
            </div>
          </div>
        </div>
        <div className="mt-[3px] ml-[4px] h-[2px] flex gap-[21px] shrink-0">
          <div className="w-[226px] h-full bg-black" />
          <div className="w-[240px] h-full bg-black" />
        </div>
      </div>

      {/* annotation arrows */}
      <svg className="absolute left-0 top-0 pointer-events-none" width="1863" height="866" viewBox="0 0 1863 866">
        <g fill="#f03c3c">
          <polygon points="222,467 369,414.7 367.5,410.4 389,412 372.5,425.6 371,421.3" />
          <polygon points="403,597 801.8,496.3 800.7,492 822,495 804.5,507.5 803.4,503.1" />
          <polygon points="783,812 1001,802 1001,798 1020,807 1001,817 1001,812" />
          <polygon points="1398,710 1686,589 1684,584 1706,585 1691,601 1689,596" />
        </g>
      </svg>
    </div>
  );
}
